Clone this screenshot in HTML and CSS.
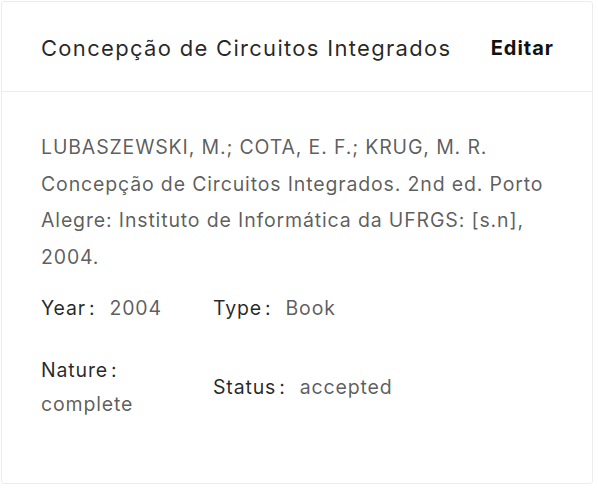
FILE: index.html
```html
<!DOCTYPE html>
<html>
<head>
<meta charset="utf-8">
<link rel="stylesheet" href="styles.css">
</head>
<body>
<div class="card">
  <div class="card-head">
    <div class="card-title">Concepção de Circuitos Integrados</div>
    <a class="card-extra">Editar</a>
  </div>
  <div class="card-body">
    <p class="citation">LUBASZEWSKI, M.; COTA, E. F.; KRUG, M. R. Concepção de Circuitos Integrados. 2nd ed. Porto Alegre: Instituto de Informática da UFRGS: [s.n], 2004.</p>
    <div class="desc">
      <div class="item"><span class="label">Year</span><span class="value">2004</span></div>
      <div class="item"><span class="label">Type</span><span class="value">Book</span></div>
      <div class="item"></div>
      <div class="item wrap"><span class="label">Nature</span><span class="value">complete</span></div>
      <div class="item"><span class="label">Status</span><span class="value">accepted</span></div>
      <div class="item"></div>
    </div>
  </div>
</div>
</body>
</html>
```

FILE: styles.css
```css
html, body {
  margin: 0;
  padding: 0;
  background: #fff;
}
body {
  font-family: Inter, "Noto Sans", sans-serif;
  padding: 1px 0 0 1px;
}
.card {
  box-sizing: border-box;
  width: 592px;
  height: 483px;
  border: 1px solid #ececec;
  border-radius: 3px;
  background: #fff;
}
.card-head {
  display: flex;
  align-items: center;
  justify-content: space-between;
  height: 90px;
  padding: 2px 38px 0 39px;
  box-sizing: border-box;
  border-bottom: 1px solid #ececec;
}
.card-title {
  font-size: 22px;
  letter-spacing: 1.3px;
  color: rgba(0,0,0,0.85);
  font-weight: 400;
}
.card-extra {
  font-size: 20px;
  letter-spacing: 1px;
  font-weight: 700;
  color: #111;
}
.card-body {
  padding: 37px 39px 0 39px;
}
.citation {
  margin: 0;
  font-size: 19.5px;
  letter-spacing: 0.85px;
  line-height: 36.6px;
  color: rgba(0,0,0,0.65);
}
.desc {
  display: grid;
  grid-template-columns: 172px 172px 1fr;
  row-gap: 28px;
  margin-top: 16px;
  align-items: center;
}
.item {
  font-size: 19.5px;
  letter-spacing: 0.85px;
  line-height: 34px;
}
.label {
  color: rgba(0,0,0,0.85);
}
.label::after {
  content: ":";
  margin: 0 14px 0 3px;
}
.value {
  color: rgba(0,0,0,0.65);
}
.wrap .label {
  display: block;
}
```
